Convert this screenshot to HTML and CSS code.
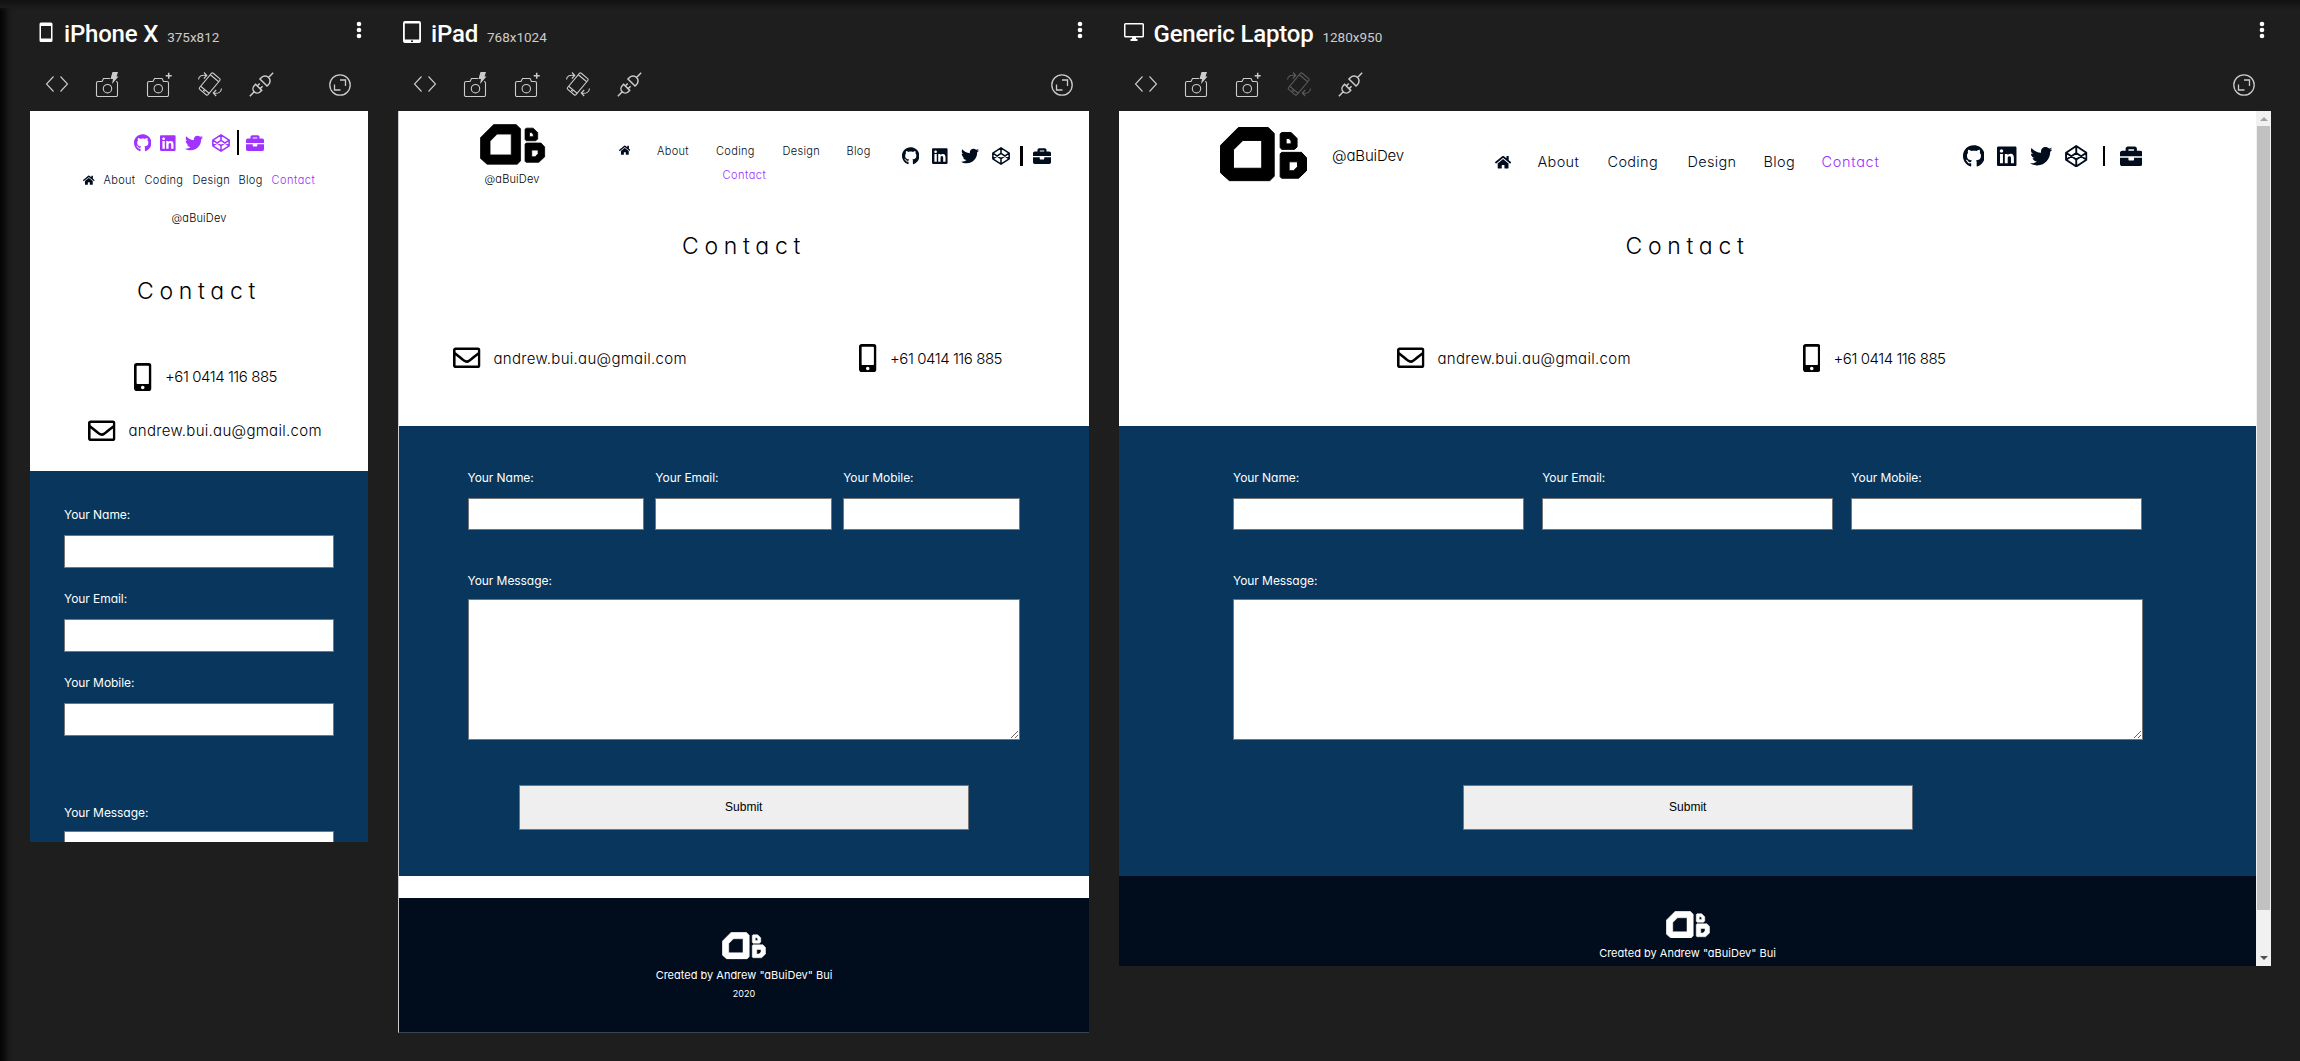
FILE: index.html
```html
<!DOCTYPE html>
<html lang="en">
<head>
<meta charset="utf-8">
<title>Device preview</title>
<link rel="stylesheet" href="styles.css">
</head>
<body>
<svg class="sprite" aria-hidden="true">
  <symbol id="logo" viewBox="0 0 88 55"><path fill-rule="evenodd" stroke="currentColor" stroke-linejoin="round" d="M18.500.500H48.500L54.500 6.500V49.500L50 54H9.500L.5 46V18.500ZM23 13.500L13.500 23V41.500H42V13.500ZM62 5.500H71.500L77.500 11.500V20L75 22.500H62L60.500 20.500V7ZM66.500 11.500V17H71.500V14L69.500 11.500ZM62 25.500H82L87 31V44L79 51.500H62L60.500 50V27ZM69.500 35V44H74L78 40V35Z"/></symbol>
  <symbol id="github" viewBox="0 0 496 512"><path d="M165.900 397.400c0 2-2.300 3.600-5.200 3.600-3.300.3-5.600-1.300-5.600-3.600 0-2 2.300-3.600 5.200-3.600 3-.3 5.600 1.300 5.600 3.600zm-31.100-4.500c-.7 2 1.300 4.300 4.300 4.900 2.600 1 5.600 0 6.200-2s-1.300-4.300-4.300-5.200c-2.600-.7-5.500.3-6.200 2.300zm44.200-1.700c-2.900.7-4.900 2.600-4.600 4.900.3 2 2.900 3.300 5.900 2.600 2.900-.7 4.900-2.600 4.600-4.600-.3-1.900-3-3.200-5.900-2.900zM244.800 8C106.100 8 0 113.300 0 252c0 110.900 69.800 205.800 169.500 239.200 12.800 2.300 17.300-5.600 17.300-12.100 0-6.200-.3-40.400-.3-61.400 0 0-70 15-84.700-29.800 0 0-11.400-29.100-27.800-36.600 0 0-22.900-15.700 1.600-15.400 0 0 24.900 2 38.600 25.800 21.900 38.600 58.600 27.500 72.900 20.900 2.300-16 8.800-27.100 16-33.700-55.900-6.200-112.300-14.300-112.300-110.500 0-27.500 7.600-41.300 23.600-58.900-2.600-6.500-11.100-33.300 2.600-67.900 20.900-6.500 69 27 69 27 20-5.600 41.500-8.500 62.800-8.500s42.800 2.900 62.800 8.500c0 0 48.100-33.600 69-27 13.700 34.700 5.200 61.400 2.600 67.900 16 17.700 25.800 31.500 25.800 58.900 0 96.500-58.900 104.200-114.800 110.500 9.200 7.900 17 22.900 17 46.400 0 33.700-.3 75.400-.3 83.600 0 6.500 4.600 14.400 17.300 12.100C428.200 457.800 496 362.900 496 252 496 113.300 383.500 8 244.800 8z"/></symbol>
  <symbol id="linkedin" viewBox="0 0 448 512"><path d="M416 32H31.900C14.300 32 0 46.500 0 64.300v383.400C0 465.500 14.300 480 31.900 480H416c17.600 0 32-14.500 32-32.300V64.300c0-17.800-14.400-32.300-32-32.300zM135.400 416H69V202.200h66.500V416zm-33.200-243c-21.300 0-38.500-17.300-38.500-38.500S80.900 96 102.200 96c21.200 0 38.500 17.300 38.500 38.500 0 21.300-17.200 38.500-38.500 38.500zm282.100 243h-66.400V312c0-24.800-.5-56.700-34.500-56.700-34.600 0-39.900 27-39.900 54.900V416h-66.400V202.200h63.700v29.200h.9c8.900-16.800 30.600-34.500 62.900-34.500 67.200 0 79.700 44.300 79.700 101.900V416z"/></symbol>
  <symbol id="twitter" viewBox="0 0 512 512"><path d="M459.370 151.716c.325 4.548.325 9.097.325 13.645 0 138.720-105.583 298.558-298.558 298.558-59.452 0-114.680-17.219-161.137-47.106 8.447.974 16.568 1.299 25.340 1.299 49.055 0 94.213-16.568 130.274-44.832-46.132-.975-84.792-31.188-98.112-72.772 6.498.974 12.995 1.624 19.818 1.624 9.421 0 18.843-1.300 27.614-3.573-48.081-9.747-84.143-51.980-84.143-102.985v-1.299c13.969 7.797 30.214 12.670 47.431 13.319-28.264-18.843-46.781-51.005-46.781-87.391 0-19.492 5.197-37.360 14.294-52.954 51.655 63.675 129.300 105.258 216.365 109.807-1.624-7.797-2.599-15.918-2.599-24.040 0-57.828 46.782-104.934 104.934-104.934 30.213 0 57.502 12.670 76.670 33.137 23.715-4.548 46.456-13.320 66.599-25.340-7.798 24.366-24.366 44.833-46.132 57.827 21.117-2.273 41.584-8.122 60.426-16.243-14.292 20.791-32.161 39.308-52.628 54.253z"/></symbol>
  <symbol id="codepen" viewBox="0 0 512 512"><path fill="none" stroke="currentColor" stroke-width="44" stroke-linejoin="round" d="M256 24L488 176V336L256 488L24 336V176ZM24 176L256 330L488 176M24 336L256 182L488 336M256 24V182M256 330V488"/></symbol>
  <symbol id="briefcase" viewBox="0 0 512 512"><path d="M320 336c0 8.840-7.160 16-16 16h-96c-8.840 0-16-7.160-16-16v-48H0v144c0 25.600 22.400 48 48 48h416c25.600 0 48-22.400 48-48V288H320v48zm144-208h-80V80c0-25.600-22.400-48-48-48H176c-25.600 0-48 22.400-48 48v48H48c-25.600 0-48 22.400-48 48v80h512v-80c0-25.600-22.400-48-48-48zm-144 0H192V96h128v32z"/></symbol>
  <symbol id="home" viewBox="0 0 576 512"><path d="M280.370 148.260L96 300.110V464a16 16 0 0 0 16 16l112.060-.29a16 16 0 0 0 15.920-16V368a16 16 0 0 1 16-16h64a16 16 0 0 1 16 16v95.640a16 16 0 0 0 16 16.050L464 480a16 16 0 0 0 16-16V300L295.670 148.260a12.190 12.190 0 0 0-15.300 0zM571.600 251.470L488 182.560V44.050a12 12 0 0 0-12-12h-56a12 12 0 0 0-12 12v72.610L318.470 43a48 48 0 0 0-61 0L4.340 251.470a12 12 0 0 0-1.600 16.900l25.500 31A12 12 0 0 0 45.150 301l235.220-193.740a12.190 12.190 0 0 1 15.300 0L530.900 301a12 12 0 0 0 16.900-1.600l25.500-31a12 12 0 0 0-1.700-16.930z"/></symbol>
  <symbol id="mobile" viewBox="0 0 320 512"><path d="M272 0H48C21.500 0 0 21.500 0 48v416c0 26.500 21.500 48 48 48h224c26.500 0 48-21.500 48-48V48c0-26.500-21.500-48-48-48zM160 480c-17.700 0-32-14.300-32-32s14.300-32 32-32 32 14.300 32 32-14.300 32-32 32zm112-108c0 6.600-5.400 12-12 12H60c-6.600 0-12-5.400-12-12V60c0-6.600 5.400-12 12-12h200c6.600 0 12 5.400 12 12v312z"/></symbol>
  <symbol id="envelope" viewBox="0 0 512 512"><path d="M464 64H48C21.490 64 0 85.490 0 112v288c0 26.510 21.490 48 48 48h416c26.510 0 48-21.490 48-48V112c0-26.510-21.490-48-48-48zm0 48v40.805c-22.422 18.259-58.168 46.651-134.587 106.490-16.841 13.247-50.201 45.072-73.413 44.701-23.208.375-56.579-31.459-73.413-44.701C106.180 199.465 70.425 171.067 48 152.805V112h416zM48 400V214.398c22.914 18.251 55.409 43.862 104.938 82.646 21.857 17.205 60.134 55.186 103.062 54.955 42.717.231 80.509-37.199 103.053-54.947 49.528-38.783 82.032-64.401 104.947-82.653V400H48z"/></symbol>

  <symbol id="dev-phone" viewBox="0 0 14 21"><path fill-rule="evenodd" d="M2 .5H12A1.500 1.500 0 0 1 13.500 2V18.500A1.500 1.500 0 0 1 12 20H2A1.500 1.500 0 0 1 .5 18.500V2A1.500 1.500 0 0 1 2 .5ZM2 4V16.500H12V4Z"/></symbol>
  <symbol id="dev-tablet" viewBox="0 0 18 22"><path fill-rule="evenodd" d="M2 0H16A2 2 0 0 1 18 2V20A2 2 0 0 1 16 22H2A2 2 0 0 1 0 20V2A2 2 0 0 1 2 0ZM1.800 2.500V18.500H16.200V2.500ZM8 19.500V21H10V19.500Z"/></symbol>
  <symbol id="dev-laptop" viewBox="0 0 20 18"><path fill-rule="evenodd" d="M1.500 0H18.500A1.500 1.500 0 0 1 20 1.500V13A1.500 1.500 0 0 1 18.500 14.500H12V16H13.500V18H6.500V16H8V14.500H1.500A1.500 1.500 0 0 1 0 13V1.500A1.500 1.500 0 0 1 1.500 0ZM1.500 1.500V13H18.500V1.500Z"/></symbol>
  <symbol id="dots" viewBox="0 0 6 18"><circle cx="3" cy="3" r="2.300"/><circle cx="3" cy="9" r="2.300"/><circle cx="3" cy="15" r="2.300"/></symbol>

  <symbol id="t-code" viewBox="0 0 28 28"><path d="M10.500 6.500L3.500 14L10.500 21.500M17.500 6.500L24.500 14L17.500 21.500"/></symbol>
  <symbol id="t-flash" viewBox="0 0 28 28"><path d="M16 8.500H9.500L8 11.500H4A1.500 1.500 0 0 0 2.500 13V25A1.500 1.500 0 0 0 4 26.500H22A1.500 1.500 0 0 0 23.500 25V13A1.500 1.500 0 0 0 22 11.500"/><circle cx="13.500" cy="18.700" r="4.200"/><path class="solid" d="M18.500 2H24L22.500 6.500H24.500L18 14L19 9H16.500Z"/></symbol>
  <symbol id="t-plus" viewBox="0 0 28 28"><path d="M8 11.500L9.500 8.500H17L18.500 11.500H22A1.500 1.500 0 0 1 23.500 13V25A1.500 1.500 0 0 1 22 26.500H4A1.500 1.500 0 0 1 2.500 25V13A1.500 1.500 0 0 1 4 11.500Z"/><path stroke-width="1.500" d="M23.700 2.700V8.700M20.700 5.700H26.700"/><circle cx="13.300" cy="18.700" r="4.200"/></symbol>
  <symbol id="t-rotate" viewBox="0 0 28 28"><g transform="translate(13.700 14) rotate(40)"><rect x="-5.500" y="-10.500" width="11" height="21" rx="1.300"/><path d="M-5.500-7.500H5.500M-5.500 7.500H5.500M-1 9H1"/></g><path d="M2.500 9.500C2.800 6 6 4.500 10.500 5.500M8 2.500L10.800 5.500L7.800 8.500M25.500 18.500C25.200 22.500 22 24 17.500 23M20.200 20L17.300 23L20.200 26"/></symbol>
  <symbol id="t-plug" viewBox="0 0 28 28"><g transform="translate(14.500 14.500) rotate(-45)" stroke-width="1.500"><path d="M2.800-5H5A5 5 0 0 1 5 5H2.800ZM10 0H16.500M-4-4.300H-6A4.300 4.300 0 0 0-6 4.300H-4ZM-10.300 0H-16.500M-4-2H-.5M-4 2H-.5"/></g></symbol>
  <symbol id="t-expand" viewBox="0 0 28 28"><circle cx="14" cy="14" r="10.200"/><path d="M14 9H19.500V15M8.500 13.500V19H14.500"/></symbol>
</svg>

<main class="board">
  <section class="device phone">
    <header class="chrome">
      <div class="title-row"><svg class="dev-icon"><use href="#dev-phone"/></svg><h2>iPhone X</h2><span class="dims">375x812</span><svg class="dots"><use href="#dots"/></svg></div>
      <div class="tools"><svg><use href="#t-code"/></svg><svg><use href="#t-flash"/></svg><svg><use href="#t-plus"/></svg><svg><use href="#t-rotate"/></svg><svg><use href="#t-plug"/></svg><svg class="expand"><use href="#t-expand"/></svg></div>
    </header>
    <div class="screen">
      <div class="social"><svg class="gh"><use href="#github"/></svg><svg class="li"><use href="#linkedin"/></svg><svg class="tw"><use href="#twitter"/></svg><svg class="cp"><use href="#codepen"/></svg><i class="bar"></i><svg class="bc"><use href="#briefcase"/></svg></div>
      <nav class="nav"><a><svg class="home"><use href="#home"/></svg></a><a>About</a><a>Coding</a><a>Design</a><a>Blog</a><a class="active">Contact</a></nav>
      <p class="handle"><span>@aBuiDev</span></p>
      <h1><span>Contact</span></h1>
      <div class="contacts">
        <div class="contact tel"><svg class="mobile"><use href="#mobile"/></svg><span>+61 0414 116 885</span></div>
        <div class="contact mail"><svg class="envelope"><use href="#envelope"/></svg><span>andrew.bui.au@gmail.com</span></div>
      </div>
      <form class="form">
        <div class="fields">
          <label><span>Your Name:</span><input type="text"></label>
          <label><span>Your Email:</span><input type="text"></label>
          <label><span>Your Mobile:</span><input type="text"></label>
        </div>
        <label class="message"><span>Your Message:</span><textarea></textarea></label>
      </form>
    </div>
  </section>

  <section class="device tablet">
    <header class="chrome">
      <div class="title-row"><svg class="dev-icon"><use href="#dev-tablet"/></svg><h2>iPad</h2><span class="dims">768x1024</span><svg class="dots"><use href="#dots"/></svg></div>
      <div class="tools"><svg><use href="#t-code"/></svg><svg><use href="#t-flash"/></svg><svg><use href="#t-plus"/></svg><svg><use href="#t-rotate"/></svg><svg><use href="#t-plug"/></svg><svg class="expand"><use href="#t-expand"/></svg></div>
    </header>
    <div class="screen">
      <div class="masthead">
        <div class="brand"><svg class="logo"><use href="#logo"/></svg><p class="handle"><span>@aBuiDev</span></p></div>
        <nav class="nav"><div class="nav-row"><a><svg class="home"><use href="#home"/></svg></a><a>About</a><a>Coding</a><a>Design</a><a>Blog</a></div><a class="active">Contact</a></nav>
        <div class="social"><svg class="gh"><use href="#github"/></svg><svg class="li"><use href="#linkedin"/></svg><svg class="tw"><use href="#twitter"/></svg><svg class="cp"><use href="#codepen"/></svg><i class="bar"></i><svg class="bc"><use href="#briefcase"/></svg></div>
      </div>
      <h1><span>Contact</span></h1>
      <div class="contacts">
        <div class="contact mail"><svg class="envelope"><use href="#envelope"/></svg><span>andrew.bui.au@gmail.com</span></div>
        <div class="contact tel"><svg class="mobile"><use href="#mobile"/></svg><span>+61 0414 116 885</span></div>
      </div>
      <form class="form">
        <div class="fields">
          <label><span>Your Name:</span><input type="text"></label>
          <label><span>Your Email:</span><input type="text"></label>
          <label><span>Your Mobile:</span><input type="text"></label>
        </div>
        <label class="message"><span>Your Message:</span><textarea></textarea></label>
        <button class="submit" type="button">Submit</button>
      </form>
      <footer class="foot"><svg class="logo"><use href="#logo"/></svg><p class="credit"><span>Created by Andrew "aBuiDev" Bui</span></p><p class="year"><span>2020</span></p></footer>
    </div>
  </section>

  <section class="device laptop">
    <header class="chrome">
      <div class="title-row"><svg class="dev-icon"><use href="#dev-laptop"/></svg><h2>Generic Laptop</h2><span class="dims">1280x950</span><svg class="dots"><use href="#dots"/></svg></div>
      <div class="tools"><svg><use href="#t-code"/></svg><svg><use href="#t-flash"/></svg><svg><use href="#t-plus"/></svg><svg class="off"><use href="#t-rotate"/></svg><svg><use href="#t-plug"/></svg><svg class="expand"><use href="#t-expand"/></svg></div>
    </header>
    <div class="screen">
      <div class="page">
        <div class="masthead">
          <div class="brand"><svg class="logo"><use href="#logo"/></svg><p class="handle"><span>@aBuiDev</span></p></div>
          <nav class="nav"><a><svg class="home"><use href="#home"/></svg></a><a>About</a><a>Coding</a><a>Design</a><a>Blog</a><a class="active">Contact</a></nav>
          <div class="social"><svg class="gh"><use href="#github"/></svg><svg class="li"><use href="#linkedin"/></svg><svg class="tw"><use href="#twitter"/></svg><svg class="cp"><use href="#codepen"/></svg><i class="bar"></i><svg class="bc"><use href="#briefcase"/></svg></div>
        </div>
        <h1><span>Contact</span></h1>
        <div class="contacts">
          <div class="contact mail"><svg class="envelope"><use href="#envelope"/></svg><span>andrew.bui.au@gmail.com</span></div>
          <div class="contact tel"><svg class="mobile"><use href="#mobile"/></svg><span>+61 0414 116 885</span></div>
        </div>
        <form class="form">
          <div class="fields">
            <label><span>Your Name:</span><input type="text"></label>
            <label><span>Your Email:</span><input type="text"></label>
            <label><span>Your Mobile:</span><input type="text"></label>
          </div>
          <label class="message"><span>Your Message:</span><textarea></textarea></label>
          <button class="submit" type="button">Submit</button>
        </form>
        <footer class="foot"><svg class="logo"><use href="#logo"/></svg><p class="credit"><span>Created by Andrew "aBuiDev" Bui</span></p></footer>
      </div>
      <div class="scrollbar"><i class="up"></i><i class="thumb"></i><i class="down"></i></div>
    </div>
  </section>
</main>
</body>
</html>
```
FILE: styles.css
```css
* { box-sizing: border-box; margin: 0; padding: 0; }
body {
  width: 2300px;
  height: 1061px;
  overflow: hidden;
  background:
    linear-gradient(#111 0, #181818 5px, rgba(30, 30, 30, 0) 11px) no-repeat,
    linear-gradient(90deg, #040404 0, #0c0c0c 4px, #1a1a1a 9px, #1e1e1e 13px) no-repeat 0 8px / 13px 100%,
    #1e1e1e;
  color: #000;
  font-family: Inter, "Open Sans", sans-serif;
  font-feature-settings: "cv11" 1;
  white-space: nowrap;
}
svg { display: block; fill: currentColor; flex: none; }
.sprite { position: absolute; width: 0; height: 0; }
.board { display: flex; align-items: flex-start; gap: 30px; padding-left: 30px; }
.device { flex: none; }
.phone { width: 338px; }
.tablet { width: 691px; }
.laptop { width: 1152px; }

/* device title and toolbar */
.chrome { height: 111px; padding-top: 20px; font-family: Roboto, sans-serif; color: #fff; }
.title-row { display: flex; align-items: baseline; height: 28px; }
.title-row h2 { font-size: 24px; line-height: 28px; font-weight: 500; letter-spacing: -.2px; }
.dims { font-size: 13.500px; line-height: 20px; color: #ccc; margin-left: 9px; }
.dev-icon { align-self: flex-start; }
.phone .dev-icon { width: 14px; height: 21px; margin: 2px 11px 0 9px; }
.tablet .dev-icon { width: 18px; height: 22px; margin: 1px 10px 0 5px; }
.laptop .dev-icon { width: 20px; height: 18px; margin: 3px 9.500px 0 5px; }
.dots { width: 6px; height: 18px; align-self: flex-start; margin: 1px 6px 0 auto; }
.tools { display: flex; gap: 23px; margin-top: 22px; padding: 0 14px 0 13px; }
.tablet .tools, .laptop .tools { padding-left: 12.500px; padding-right: 13.500px; }
.tools svg { width: 28px; height: 28px; fill: none; stroke: #ccc; stroke-width: 1.1; }
.solid { fill: #ccc; stroke: none; }
.tools .off { opacity: .35; }
.tools .expand { margin-left: auto; margin-top: .5px; stroke-width: 1.3; }

/* shared site pieces */
.screen { background: #fff; overflow: hidden; }
.nav, .social { color: #010d1c; font-weight: 300; }
.nav a { display: block; }
.nav .active { color: #9b30ff; letter-spacing: .5px; }
.gh, .li, .tw, .cp, .bc { height: 18px; }
.gh { width: 17.400px; }
.li { width: 15.750px; }
.tw, .cp, .bc { width: 18px; }
.bar { background: #000; }
.home { width: 11.700px; height: 10.400px; }
.nav, .handle { font-size: 11px; line-height: 20px; font-weight: 300; letter-spacing: .33px; }
.handle { letter-spacing: .16px; }
h1 { font-size: 23px; line-height: 30px; font-weight: 300; letter-spacing: 5.700px; text-align: center; }
.contact { display: flex; align-items: center; height: 28px; font-size: 15px; font-weight: 300; }
.mail span { letter-spacing: .29px; }
.tel span { letter-spacing: -.45px; }
.mobile { width: 17.500px; height: 28px; margin-right: 13.500px; }
.envelope { width: 27.500px; height: 27.500px; margin-right: 13px; }
.form { background: #08365c; color: #fff; font-size: 12px; }
.form label { display: block; line-height: 18px; font-weight: 400; letter-spacing: -.06px; }
.form label span { display: block; }
input, textarea, .submit { display: block; width: 100%; border: 1px solid #767676; background: #fff; border-radius: 0; }
input { height: 32.500px; margin-top: 11px; }
textarea { height: 140.500px; }
.submit { width: 450px; height: 45px; margin: 45px auto 0; background: #efefef; color: #000; font: 12px "Liberation Sans", Arial, sans-serif; }
.foot { background: #010d1c; color: #fff; text-align: center; }
.foot .logo { width: 44px; height: 27.500px; margin: 0 auto; }
.credit { font-size: 11px; line-height: 18px; margin-top: 6.500px; }
.year { font-size: 9px; line-height: 14px; margin-top: 2.500px; }

/* iPhone */
.phone .screen { height: 731px; }
.phone .social { display: flex; align-items: center; height: 25px; margin-top: 0; padding-left: 103.500px; color: #a033ff; }
.phone .screen { padding-top: 19px; }
.phone .li { margin-left: 9px; }
.phone .tw { margin-left: 9px; }
.phone .cp { margin-left: 9px; }
.phone .bar { width: 2.500px; height: 25px; margin-left: 7px; }
.phone .bc { margin-left: 7px; }
.phone .nav { display: grid; grid-template-columns: 20.500px 41px 48px 46px 33px 45px; margin-top: 15px; padding-left: 53px; align-items: center; }
.phone .handle { margin-top: 17.500px; text-align: center; }
.phone h1 { margin-top: 48px; }
.phone .tel { margin-top: 57px; padding-left: 104px; }
.phone .mail { margin-top: 26px; padding-left: 58px; }
.phone .form { margin-top: 26px; padding: 35.500px 34px 0; height: 400px; }
.phone .fields { display: grid; gap: 22.700px; }
.phone .message { margin-top: 68px; }
.phone textarea { margin-top: 10px; }

/* iPad */
.tablet .screen { height: 922px; border-left: 1px solid #c9cdd1; border-bottom: 1px solid #3a4450; }
.tablet .masthead { display: flex; height: 119.500px; }
.tablet .brand { width: 219.500px; padding: 13px 0 0 81px; }
.tablet .brand .logo { width: 65.500px; height: 41px; }
.tablet .handle { width: 64px; text-align: center; margin-top: 4px; }
.tablet .nav { width: 283.500px; padding-top: 29.500px; }
.tablet .nav-row { display: grid; grid-template-columns: 38.500px 59px 66.500px 64px 30px; align-items: center; }
.tablet .nav .active { margin: 4.500px 0 0 104px; }
.tablet .social { display: flex; align-items: center; height: 20px; margin-top: 34.500px; }
.tablet .li { margin-left: 12.500px; }
.tablet .tw { margin-left: 13px; }
.tablet .cp { margin-left: 13px; }
.tablet .bar { width: 2.500px; height: 20px; margin-left: 10.500px; }
.tablet .bc { margin-left: 10.500px; }
.tablet .contacts { display: flex; margin-top: 83.500px; padding-left: 54px; }
.tablet .mail { width: 406px; }
.tablet .form { margin-top: 54px; height: 450px; padding: 42.500px 69px 0 68.500px; }
.tablet .fields { display: grid; grid-template-columns: repeat(3, 1fr); gap: 11px; }
.message { margin-top: 41.500px; }
.message textarea { margin-top: 9.500px; }
.tablet .foot { height: 136px; margin-top: 21.500px; padding-top: 34.500px; }

/* laptop */
.laptop .screen { display: flex; height: 855px; }
.laptop .page { width: 1137px; }
.laptop .masthead { display: flex; height: 119.500px; }
.laptop .brand { display: flex; width: 376px; padding: 16px 0 0 101px; }
.laptop .brand .logo { width: 87.500px; height: 54.700px; }
.laptop .brand .handle { font-size: 15px; letter-spacing: -.15px; margin: 18.500px 0 0 24.500px; }
.laptop .nav { display: grid; grid-template-columns: 42.500px 70px 80px 76px 58px 141px; height: 20px; margin-top: 41px; align-items: center; font-size: 14.500px; }
.laptop .nav .active { letter-spacing: .7px; }
.laptop .home { width: 16.200px; height: 14.400px; }
.laptop .social { display: flex; align-items: center; height: 22.500px; margin-top: 33.500px; }
.laptop .social svg { height: 22.500px; }
.laptop .gh { width: 21.800px; }
.laptop .li { width: 19.700px; margin-left: 13px; }
.laptop .tw { width: 22.500px; margin-left: 13px; }
.laptop .cp { width: 22.500px; margin-left: 13px; }
.laptop .bc { width: 22.500px; margin-left: 15px; }
.laptop .bar { width: 2px; height: 20px; margin-left: 15px; }
.laptop .contacts { display: flex; margin-top: 83.500px; padding-left: 278px; }
.laptop .mail { width: 405.500px; }
.laptop .form { margin-top: 54px; height: 450px; padding: 42.500px 113.500px 0 114px; }
.laptop .fields { display: grid; grid-template-columns: repeat(3, 1fr); gap: 18px; }
.laptop .foot { height: 90px; padding-top: 34.500px; }
.laptop .credit { margin-top: 6px; }
.scrollbar { width: 15px; height: 855px; background: #f1f1f1; display: flex; flex-direction: column; align-items: center; }
.scrollbar i { display: block; }
.up { border: 4px solid transparent; border-top: 0; border-bottom-color: #a3a3a3; margin: 6px 0 5px; }
.thumb { width: 13px; height: 784px; background: #c1c1c1; }
.down { border: 4px solid transparent; border-bottom: 0; border-top-color: #505050; margin-top: 46px; }
```
